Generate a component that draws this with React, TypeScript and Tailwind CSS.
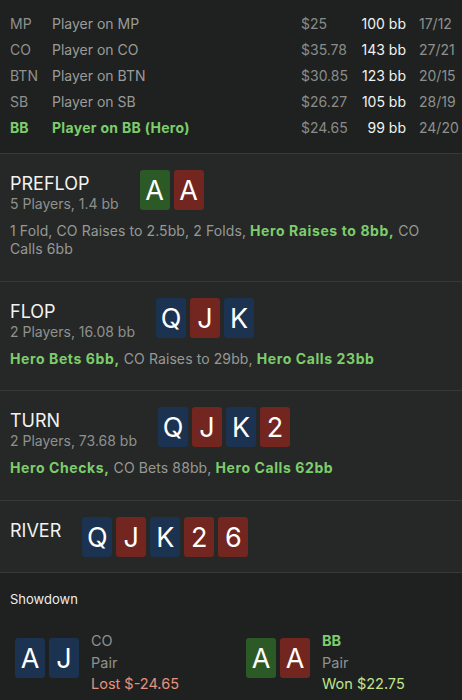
import React from 'react';

type Suit = 'g' | 'r' | 'b';

interface CardProps {
  rank: string;
  suit: Suit;
}

const suitBg: Record<Suit, string> = {
  g: 'bg-[#2c5a26]',
  r: 'bg-[#72261f]',
  b: 'bg-[#1b3250]',
};

const Card: React.FC<CardProps> = ({ rank, suit }) => (
  <div
    className={`w-[30px] h-[40px] rounded-[3px] flex items-center justify-center text-[27px] leading-none text-white ${suitBg[suit]}`}
  >
    {rank}
  </div>
);

const players = [
  { pos: 'MP', name: 'Player on MP', stack: '$25', bb: '100 bb', ratio: '17/12' },
  { pos: 'CO', name: 'Player on CO', stack: '$35.78', bb: '143 bb', ratio: '27/21' },
  { pos: 'BTN', name: 'Player on BTN', stack: '$30.85', bb: '123 bb', ratio: '20/15' },
  { pos: 'SB', name: 'Player on SB', stack: '$26.27', bb: '105 bb', ratio: '28/19' },
  { pos: 'BB', name: 'Player on BB (Hero)', stack: '$24.65', bb: '99 bb', ratio: '24/20', hero: true },
];

type Action = { text: string; hero?: boolean };

interface StreetProps {
  title: string;
  info?: string;
  cards: CardProps[];
  actions?: Action[];
  pad: string;
}

const Street: React.FC<StreetProps> = ({ title, info, cards, actions, pad }) => (
  <div className={`bg-[#252826] border-b border-[#363937] px-[10px] pt-4 ${pad}`}>
    <div className="flex items-start gap-[21px]">
      <div className="mt-[3px]">
        <div className="text-[18px] leading-[22px] text-[#f2f2f2]">{title}</div>
        {info && <div className="text-sm leading-[18px] text-[#8f918f]">{info}</div>}
      </div>
      <div className="flex gap-1">
        {cards.map((c, i) => (
          <Card key={i} {...c} />
        ))}
      </div>
    </div>
    {actions && (
      <p className="mt-[9px] text-sm leading-[18px] text-[#979997] tracking-[0.1px]">
        {actions.map((a, i) => {
          const sep = i < actions.length - 1 ? ',' : '';
          return a.hero ? (
            <span key={i}>
              <span className="font-bold text-[#7dcd6c] tracking-[0.6px]">
                {a.text}
                {sep}
              </span>{' '}
            </span>
          ) : (
            <span key={i}>
              {a.text}
              {sep}{' '}
            </span>
          );
        })}
      </p>
    )}
  </div>
);

const ShowdownHand: React.FC<{
  cards: CardProps[];
  pos: string;
  hero?: boolean;
  result: string;
  won?: boolean;
}> = ({ cards, pos, hero, result, won }) => (
  <div className="flex items-center pl-[15px]">
    <div className="flex gap-1">
      {cards.map((c, i) => (
        <Card key={i} {...c} />
      ))}
    </div>
    <div className="ml-3 pt-2 text-[14.5px] leading-[21.5px]">
      <div className={hero ? 'font-bold text-[#7dcd6c]' : 'text-[#8f918f]'}>{pos}</div>
      <div className="text-[#8f918f]">Pair</div>
      <div className={won ? 'text-[#c3e58c]' : 'text-[#e8907f]'}>{result}</div>
    </div>
  </div>
);

export default function App() {
  return (
    <div className="w-[462px] h-[700px] overflow-hidden bg-[#1e211f]" style={{ fontFamily: 'Inter, "Noto Sans", sans-serif' }}>
      {/* Players */}
      <div className="pt-[11px] pb-[12px] px-[10px] border-b border-[#363937]">
        {players.map((p) => (
          <div key={p.pos} className="flex items-center h-[26px] text-sm">
            <div className={`w-[42px] ${p.hero ? 'font-bold text-[#7dcd6c]' : 'text-[#8f918f]'}`}>{p.pos}</div>
            <div className={`flex-1 ${p.hero ? 'font-bold text-[#7dcd6c] tracking-[0.3px]' : 'text-[#9a9c9a]'}`}>{p.name}</div>
            <div className="w-[60px] text-[#8a8c8a]">{p.stack}</div>
            <div className="w-[45px] text-right text-[#f2f2f2]">{p.bb}</div>
            <div className="w-[46px] pl-[13px] text-[#8f918f]">{p.ratio}</div>
          </div>
        ))}
      </div>

      <Street
        title="PREFLOP"
        info="5 Players, 1.4 bb"
        pad="pb-[23px]"
        cards={[{ rank: 'A', suit: 'g' }, { rank: 'A', suit: 'r' }]}
        actions={[
          { text: '1 Fold' },
          { text: 'CO Raises to 2.5bb' },
          { text: '2 Folds' },
          { text: 'Hero Raises to 8bb', hero: true },
          { text: 'CO Calls 6bb' },
        ]}
      />
      <Street
        title="FLOP"
        info="2 Players, 16.08 bb"
        pad="pb-[22px]"
        cards={[{ rank: 'Q', suit: 'b' }, { rank: 'J', suit: 'r' }, { rank: 'K', suit: 'b' }]}
        actions={[
          { text: 'Hero Bets 6bb', hero: true },
          { text: 'CO Raises to 29bb' },
          { text: 'Hero Calls 23bb', hero: true },
        ]}
      />
      <Street
        title="TURN"
        info="2 Players, 73.68 bb"
        pad="pb-[23px]"
        cards={[
          { rank: 'Q', suit: 'b' },
          { rank: 'J', suit: 'r' },
          { rank: 'K', suit: 'b' },
          { rank: '2', suit: 'r' },
        ]}
        actions={[
          { text: 'Hero Checks', hero: true },
          { text: 'CO Bets 88bb' },
          { text: 'Hero Calls 62bb', hero: true },
        ]}
      />
      <Street
        title="RIVER"
        pad="pb-[15px]"
        cards={[
          { rank: 'Q', suit: 'b' },
          { rank: 'J', suit: 'r' },
          { rank: 'K', suit: 'b' },
          { rank: '2', suit: 'r' },
          { rank: '6', suit: 'r' },
        ]}
      />

      {/* Showdown */}
      <div className="pt-[17px]">
        <div className="px-[10px] text-[13px] leading-[18px] text-[#eeeeee]">Showdown</div>
        <div className="grid grid-cols-2 mt-[14px]">
          <ShowdownHand
            cards={[{ rank: 'A', suit: 'b' }, { rank: 'J', suit: 'b' }]}
            pos="CO"
            result="Lost $-24.65"
          />
          <ShowdownHand
            cards={[{ rank: 'A', suit: 'g' }, { rank: 'A', suit: 'r' }]}
            pos="BB"
            hero
            result="Won $22.75"
            won
          />
        </div>
      </div>
    </div>
  );
}
